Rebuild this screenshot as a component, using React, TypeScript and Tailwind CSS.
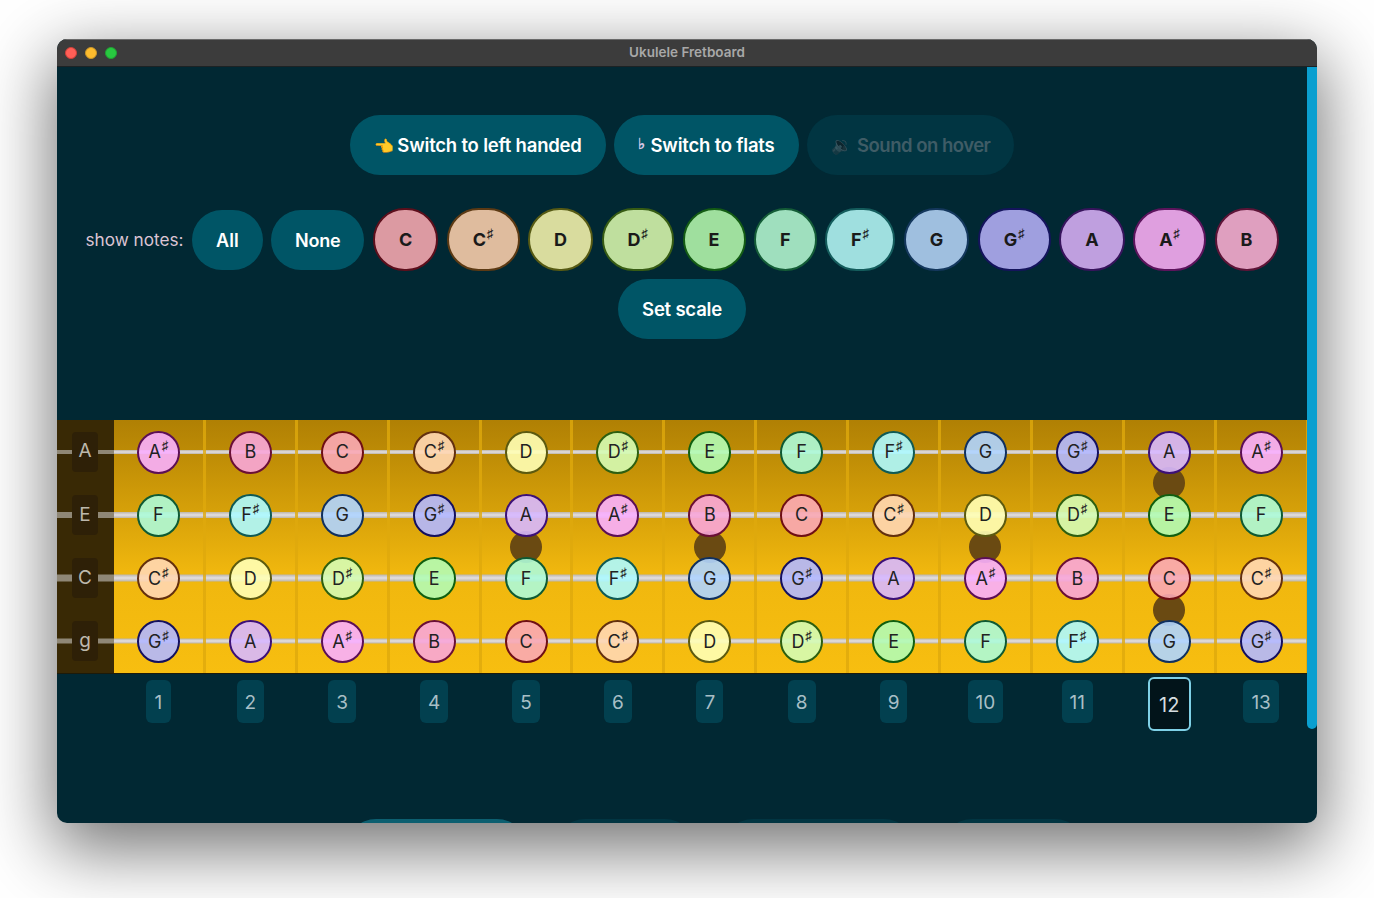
const font = { fontFamily: "Inter, 'Noto Sans', sans-serif" };

const noteStyle: Record<string, string> = {
  C: "bg-[#faa8b5]/90 border-[#6f0f14]",
  "C#": "bg-[#ffd7b3]/90 border-[#63300f]",
  D: "bg-[#ffffb5]/90 border-[#5c5a10]",
  "D#": "bg-[#d5fcb4]/90 border-[#2e5f10]",
  E: "bg-[#b3fcb4]/90 border-[#105f10]",
  F: "bg-[#adfbd8]/90 border-[#0f5a33]",
  "F#": "bg-[#adf9ff]/90 border-[#0f5a55]",
  G: "bg-[#afd4ff]/90 border-[#10305f]",
  "G#": "bg-[#b3b8ff]/90 border-[#14105f]",
  A: "bg-[#d7b8ff]/90 border-[#3c1078]",
  "A#": "bg-[#f8affe]/90 border-[#5c0f56]",
  B: "bg-[#f8a6d9]/90 border-[#6a0f36]",
};

const scaleNotes = [
  { note: "C", cls: "bg-[#dc9aa2] border-[#5c0f1c]" },
  { note: "C#", cls: "bg-[#dfbc9e] border-[#5c3a14]" },
  { note: "D", cls: "bg-[#d9dc9e] border-[#565a14]" },
  { note: "D#", cls: "bg-[#bfdf9e] border-[#375c14]" },
  { note: "E", cls: "bg-[#9fdf9e] border-[#145c14]" },
  { note: "F", cls: "bg-[#9fdfbe] border-[#145c37]" },
  { note: "F#", cls: "bg-[#9fdfdf] border-[#145c5c]" },
  { note: "G", cls: "bg-[#9fbfdf] border-[#14375c]" },
  { note: "G#", cls: "bg-[#9f9fdf] border-[#14145c]" },
  { note: "A", cls: "bg-[#bf9fdf] border-[#37145c]" },
  { note: "A#", cls: "bg-[#df9fdf] border-[#5c145c]" },
  { note: "B", cls: "bg-[#df9fbf] border-[#5c1437]" },
];

const chromatic = ["C", "C#", "D", "D#", "E", "F", "F#", "G", "G#", "A", "A#", "B"];
const strings = [
  { label: "A", start: 10, inlays: [12], thick: "h-[4px]" },
  { label: "E", start: 5, inlays: [5, 7, 10], thick: "h-[6px]" },
  { label: "C", start: 1, inlays: [12], thick: "h-[7px]" },
  { label: "g", start: 8, inlays: [] as number[], thick: "h-[5px]" },
];
const frets = [1, 2, 3, 4, 5, 6, 7, 8, 9, 10, 11, 12, 13];

const NoteName = ({ note }: { note: string }) => (
  <span className="flex items-start leading-none">
    {note[0]}
    {note[1] && <span className="relative top-[-4px] ml-[1px] text-[13px] leading-none font-bold">♯</span>}
  </span>
);

const Pill = ({ children, dim, className = "" }: { children: React.ReactNode; dim?: boolean; className?: string }) => (
  <button
    className={`flex h-[60px] items-center rounded-[30px] px-6 pt-[2px] font-semibold ${
      dim ? "bg-[#013542] text-[#3f5c66]" : "bg-[#005566] text-white"
    } ${className}`}
  >
    {children}
  </button>
);

type RowProps = { label: string; start: number; inlays: number[]; thick: string };

const FretRow = ({ label, start, inlays, thick }: RowProps) => (
  <div className="relative flex h-[63.25px]">
    <div className={`absolute inset-x-0 left-[57px] top-1/2 -translate-y-1/2 bg-gradient-to-b from-[#bdb5a8] via-[#e4e0e0] to-[#bdb5a8] ${thick}`} />
    <div className="relative z-10 flex w-[57px] shrink-0 items-center justify-center bg-[#392905] pr-[1px]">
      <div className={`absolute inset-x-0 top-1/2 -translate-y-1/2 bg-[#8f8776] ${thick}`} />
      <span className="relative flex h-10 w-[26px] items-center justify-center rounded bg-[#2e2007] text-[19px] text-[#bdb8ac]">
        {label}
      </span>
    </div>
    {frets.map((fret) => {
      const note = chromatic[(start + fret - 1) % 12];
      return (
        <div key={fret} className="relative flex w-[91.9px] shrink-0 items-center justify-center border-r-[3px] border-[#dfa90c]/80 pt-[1px]">
          {inlays.includes(fret) && (
            <div className="absolute -bottom-4 left-1/2 h-8 w-8 -translate-x-1/2 rounded-full bg-[#6a4a12]" />
          )}
          <div className={`relative z-10 flex h-[43px] w-[43px] items-center justify-center rounded-full border-2 text-[18px] text-[#222] ${noteStyle[note]}`}>
            <NoteName note={note} />
          </div>
        </div>
      );
    })}
  </div>
);

export default function App() {
  return (
    <div className="h-[898px] overflow-hidden bg-white pl-[57px] pt-[39px]" style={font}>
      <div className="flex h-[784px] w-[1260px] flex-col overflow-hidden rounded-[10px] bg-[#012833] shadow-[0_22px_70px_4px_rgba(0,0,0,0.56)]">
        <div className="grid h-[28px] shrink-0 grid-cols-[1fr_auto_1fr] items-center border-t border-b border-t-[#6a6a6a] border-b-[#1c2224] bg-[#3c3c3c] px-2 pb-[1px]">
          <div className="flex gap-2">
            <span className="h-3 w-3 rounded-full border border-[#d0413a] bg-[#ff5f57]" />
            <span className="h-3 w-3 rounded-full border border-[#c9962a] bg-[#febc2e]" />
            <span className="h-3 w-3 rounded-full border border-[#22a034] bg-[#28c840]" />
          </div>
          <div className="text-[13.5px] font-semibold text-[#a8a8a8]">Ukulele Fretboard</div>
          <div />
        </div>

        <div className="flex min-h-0 flex-1">
          <div className="w-[1250px] shrink-0 overflow-hidden">
            <div className="flex justify-center gap-2 pt-12 text-[18.5px] tracking-[-0.2px]">
              <Pill>
                <span className="mr-1 text-[16px]">👈</span>Switch to left handed
              </Pill>
              <Pill>
                <span className="relative top-[-2px] mr-[6px] text-[15px] font-bold text-[#d8c8e8]">♭</span>Switch to flats
              </Pill>
              <Pill dim className="tracking-[-0.5px]">
                <span className="mr-[6px] text-[17px] opacity-60 brightness-50">🔉</span>Sound on hover
              </Pill>
            </div>

            <div className="mt-[33px] flex items-center justify-center gap-[8.5px]">
              <span className="text-[17.2px] text-[#dcc4d4]">show notes:</span>
              <Pill className="text-[18px] font-bold">All</Pill>
              <Pill className="text-[18px] font-bold tracking-[-0.25px]">None</Pill>
              {scaleNotes.map(({ note, cls }) => (
                <button key={note} className={`flex h-[63px] items-center rounded-[32px] border-2 px-[24px] text-[18px] font-bold text-[#1a1a1a] ${cls}`}>
                  <NoteName note={note} />
                </button>
              ))}
            </div>

            <div className="mt-2 flex justify-center">
              <Pill className="text-[18.5px] tracking-[-0.2px]">Set scale</Pill>
            </div>

            <div className="mt-[81px] overflow-hidden border-b border-[#1c1a0a] bg-gradient-to-b from-[#b08004] via-[#f0b70e] via-60% to-[#f7be10]">
              {strings.map((s) => (
                <FretRow key={s.label} {...s} />
              ))}
            </div>

            <div className="flex pl-[57px]">
              {frets.map((fret) => (
                <div key={fret} className="flex w-[91.9px] shrink-0 justify-center pr-[3px]">
                  {fret === 12 ? (
                    <span className="mt-[3px] flex h-[54px] w-[43px] items-center justify-center rounded-md border-2 border-[#7fd0e6] bg-[#02141a] pt-[1px] text-[20px] text-[#d5dcdf]">
                      12
                    </span>
                  ) : (
                    <span className="mt-[6px] flex h-[43px] min-w-[25px] items-center justify-center rounded-md bg-[#02404f] px-2 pt-[3px] text-[19px] text-[#a8bfc6]">
                      {fret}
                    </span>
                  )}
                </div>
              ))}
            </div>

            <div className="mt-[88px] flex justify-center gap-[28px] pl-[66px]">
              <div className="h-[60px] w-[181px] rounded-[30px] bg-[#0c5f70]" />
              <div className="h-[60px] w-[140px] rounded-[30px] bg-[#013542]" />
              <div className="h-[60px] w-[191px] rounded-[30px] bg-[#013542]" />
              <div className="h-[60px] w-[143px] rounded-[30px] bg-[#013542]" />
            </div>
          </div>

          <div className="w-[10px] shrink-0">
            <div className="h-[662px] rounded-b-[5px] bg-[#0a9fd0]" />
          </div>
        </div>
      </div>
    </div>
  );
}
